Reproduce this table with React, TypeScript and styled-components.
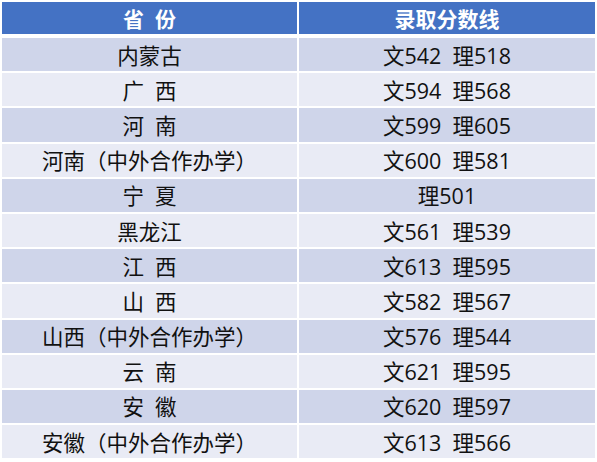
import styled, { createGlobalStyle } from "styled-components";

const GlobalStyle = createGlobalStyle`
  html, body {
    margin: 0;
    padding: 0;
    background: #ffffff;
  }
  body {
    font-family: "Open Sans", "Noto Sans CJK SC", sans-serif;
  }
`;

type Row = { province: string; score: string };

const rows: Row[] = [
  { province: "内蒙古", score: "文542  理518" },
  { province: "广  西", score: "文594  理568" },
  { province: "河  南", score: "文599  理605" },
  { province: "河南（中外合作办学）", score: "文600  理581" },
  { province: "宁  夏", score: "理501" },
  { province: "黑龙江", score: "文561  理539" },
  { province: "江  西", score: "文613  理595" },
  { province: "山  西", score: "文582  理567" },
  { province: "山西（中外合作办学）", score: "文576  理544" },
  { province: "云  南", score: "文621  理595" },
  { province: "安  徽", score: "文620  理597" },
  { province: "安徽（中外合作办学）", score: "文613  理566" },
];

const App = () => (
  <>
    <GlobalStyle />
    <Page>
      <Table>
        <HeaderCell>省  份</HeaderCell>
        <HeaderCell>录取分数线</HeaderCell>
        <HeaderGap />
        {rows.map((row, i) => [
          <Cell key={`p${i}`} $shade={i % 2 === 0}>
            {row.province}
          </Cell>,
          <Cell key={`s${i}`} $shade={i % 2 === 0}>
            {row.score}
          </Cell>,
        ])}
      </Table>
    </Page>
  </>
);

const Page = styled.div`
  padding: 2px;
  width: 597px;
  box-sizing: border-box;
`;

const Table = styled.div`
  display: grid;
  grid-template-columns: 295px 296px;
  column-gap: 2px;
  row-gap: 2px;
  grid-template-rows: 32px 0px;
  grid-auto-rows: 33.2px;
`;

const HeaderGap = styled.div`
  grid-column: 1 / -1;
`;

const HeaderCell = styled.div`
  display: flex;
  align-items: center;
  justify-content: center;
  background: #4472c4;
  color: #ffffff;
  font-weight: 700;
  font-size: 21px;
  white-space: pre;
`;

const Cell = styled.div<{ $shade: boolean }>`
  display: flex;
  align-items: center;
  justify-content: center;
  padding-bottom: 1px;
  background: ${({ $shade }) => ($shade ? "#cfd5ea" : "#e9ebf5")};
  color: #111111;
  font-size: 21.5px;
  white-space: pre;
`;

export default App;
